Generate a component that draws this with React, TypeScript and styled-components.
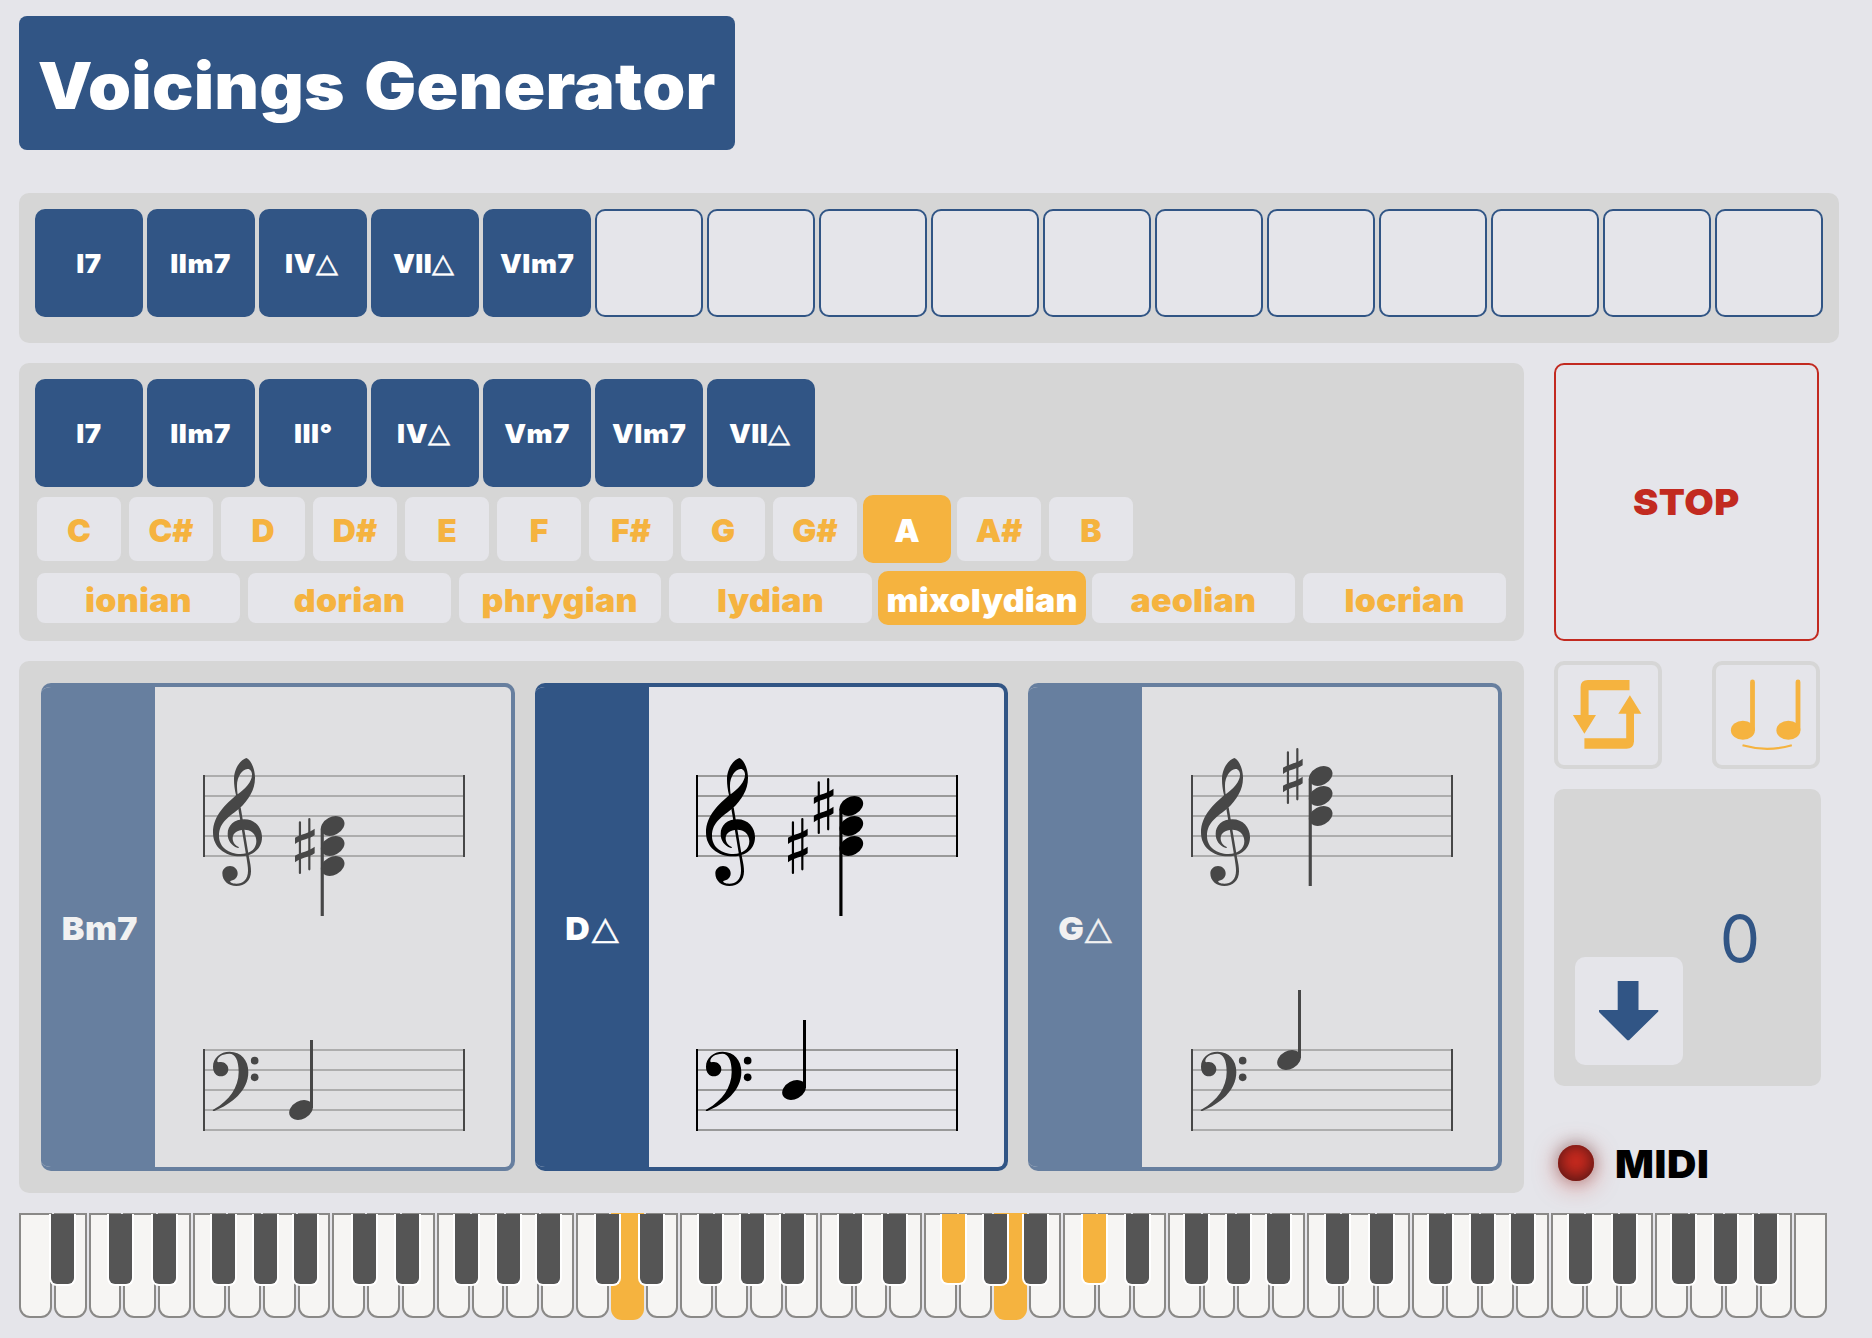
import React from 'react';
import styled, { createGlobalStyle, css } from 'styled-components';

const blue = '#315585';
const orange = '#f5b33f';
const red = '#c22a20';
const page = '#e5e5ea';
const panel = '#d6d6d6';

const GlobalStyle = createGlobalStyle`
  * { box-sizing: border-box; }
  body {
    margin: 0;
    background: ${page};
    font-family: Inter, 'Liberation Sans', sans-serif;
    font-weight: 900;
  }
`;

const Page = styled.div`
  width: 1872px;
  height: 1338px;
  padding: 16px 0 0 19px;
  display: flex;
  flex-direction: column;
  align-items: flex-start;
  overflow: hidden;
`;

const Title = styled.h1`
  margin: 0 0 43px;
  width: 716px;
  height: 134px;
  display: flex;
  align-items: center;
  justify-content: center;
  padding: 4px 0 0;
  border-radius: 8px;
  background: ${blue};
  color: #fff;
  font-size: 64px;
  font-weight: 900;
  letter-spacing: 0.2px;
  word-spacing: 5px;
  white-space: nowrap;
`;

const Wide = styled.span<{ $x: number }>`
  display: inline-block;
  transform: scaleX(${p => p.$x});
`;

const Panel = styled.section`
  border-radius: 10px;
  background: ${panel};
`;

const Progression = styled(Panel)`
  display: flex;
  gap: 4px;
  width: 1820px;
  height: 150px;
  padding: 16px;
  margin-bottom: 20px;
`;

const Triangle = styled.span`
  font-family: 'DejaVu Sans', sans-serif;
  font-weight: 400;
  letter-spacing: 0;
  margin: 0 3px 0 2px;
  -webkit-text-stroke: 0.5px currentColor;
  transform: translateY(-1.5px) scaleX(1.1);
`;

const Tile = styled.button<{ $empty?: boolean }>`
  flex: none;
  width: 108px;
  height: 108px;
  padding: 2px 0 0;
  display: flex;
  align-items: center;
  justify-content: center;
  border: 2px solid ${blue};
  border-radius: 10px;
  background: ${p => (p.$empty ? page : blue)};
  color: #fff;
  font: inherit;
  font-size: 26px;
  line-height: 32px;
  letter-spacing: 0.5px;
`;

const Main = styled.main`
  display: flex;
  gap: 30px;
  margin-bottom: 20px;
`;

const Left = styled.div`
  display: flex;
  flex-direction: column;
  gap: 20px;
  width: 1505px;
`;

const ScalePanel = styled(Panel)`
  height: 278px;
  padding: 16px;
  display: flex;
  flex-direction: column;
  gap: 8px;
`;

const Row = styled.div`
  display: flex;
  gap: 4px;
`;

const Modes = styled.div`
  display: grid;
  grid-template-columns: repeat(4, 1fr) 208px repeat(2, 1fr);
  gap: 4px;
`;

const Option = styled.button<{ $active?: boolean }>`
  padding: 0;
  display: flex;
  align-items: center;
  justify-content: center;
  border: 2px solid ${p => (p.$active ? orange : panel)};
  border-radius: 10px;
  background: ${p => (p.$active ? orange : page)};
  color: ${p => (p.$active ? '#fff' : orange)};
  font: inherit;
  font-size: 32px;
  line-height: 1;
`;

const KeyOption = styled(Option)`
  width: 88px;
  height: 68px;
  padding-top: 4px;
`;

const ModeOption = styled(Option)`
  height: 54px;
  padding-top: 5px;
  letter-spacing: 0.2px;
`;

const Cards = styled(Panel)`
  height: 532px;
  padding: 22px;
  display: grid;
  grid-template-columns: 474px 473px 474px;
  gap: 20px;
`;

const Card = styled.article<{ $current?: boolean }>`
  display: flex;
  border: 4px solid ${blue};
  border-left: 0;
  border-radius: 10px;
  overflow: hidden;
  background: ${p => (p.$current ? page : '#e6e6e9')};
  opacity: ${p => (p.$current ? 1 : 0.665)};
`;

const ChordName = styled.div`
  flex: none;
  width: 114px;
  display: flex;
  align-items: center;
  justify-content: center;
  gap: 1px;
  padding: 3px 0 0 3px;
  background: ${blue};
  color: #fff;
  font-size: 32px;
  line-height: 1;
  letter-spacing: 0.4px;
`;

const Score = styled.svg`
  display: block;
  flex: none;
  width: 356px;
  height: 480px;
`;

const Side = styled.aside`
  display: flex;
  flex-direction: column;
  gap: 20px;
  width: 267px;
`;

const Stop = styled.button`
  width: 265px;
  height: 278px;
  padding: 0;
  border: 2px solid ${red};
  border-radius: 10px;
  background: transparent;
  color: ${red};
  font: inherit;
  font-size: 36px;
  letter-spacing: 0.4px;
`;

const Toggles = styled.div`
  display: flex;
  justify-content: space-between;
  width: 266px;
`;

const Toggle = styled.button`
  width: 108px;
  height: 108px;
  padding: 0;
  border: 4px solid ${panel};
  border-radius: 10px;
  background: ${page};
  svg { display: block; margin: -4px; }
`;

const Transpose = styled(Panel)`
  width: 267px;
  height: 297px;
  padding: 0 0 21px 21px;
  display: flex;
  align-items: flex-end;
`;

const Down = styled.button`
  width: 108px;
  height: 108px;
  padding: 0;
  border: 0;
  border-radius: 10px;
  background: ${page};
  svg { display: block; }
`;

const Amount = styled.output`
  width: 114px;
  text-align: center;
  color: ${blue};
  font-family: Inter, sans-serif;
  font-size: 64px;
  font-weight: 400;
  line-height: 64px;
  padding-bottom: 94px;
`;

const Midi = styled.div`
  display: flex;
  align-items: center;
  gap: 24px;
  padding: 38px 0 0 4px;
  font-size: 38px;
  line-height: 36px;
  letter-spacing: 0.6px;
  color: #000;
`;

const MidiLabel = styled(Wide)`
  padding-top: 2px;
`;

const Led = styled.span`
  width: 36px;
  height: 36px;
  border-radius: 50%;
  background: #cf2b1f;
  box-shadow: rgba(0, 0, 0, 0.2) 0 -2px 14px 2px, inset #441313 0 -2px 18px,
    rgba(207, 43, 31, 0.5) 0 4px 24px;
`;

const Keyboard = styled.div`
  display: flex;
  gap: 2px;
`;

const White = styled.div<{ $on?: boolean }>`
  position: relative;
  width: 32.82px;
  height: 105px;
  border: 2px solid #8a8987;
  border-radius: 0 0 11px 11px;
  background: #f6f5f3;
  ${p => p.$on && css`
    height: 107px;
    border: 0;
    background: ${orange};
  `}
`;

const Black = styled.div<{ $shift: number; $on?: boolean; $flush?: boolean }>`
  position: absolute;
  z-index: 1;
  top: ${p => (p.$flush ? 1 : -1)}px;
  left: ${p => (p.$flush ? 33.8 : 31.8) + p.$shift - 13.5}px;
  width: 27px;
  height: ${p => (p.$on ? 71 : 72)}px;
  border: 2px solid #fff;
  border-top: 0;
  border-radius: 0 0 8px 8px;
  background: ${p => (p.$on ? orange : '#555')};
`;

function Chord({ text }: { text: string }) {
  const major = text.endsWith('△');
  return (
    <>
      <Wide $x={1.06}>{major ? text.slice(0, -1) : text}</Wide>
      {major && <Triangle>△</Triangle>}
    </>
  );
}

/* Glyphs are drawn on a grid of three units per pixel; staff lines are 60 units apart. */
const TREBLE =
  'M148 24C160 28 174 54 174 84C174 120 154 150 128 175C98 200 66 216 66 258C66 292 96 312 130 312C160 312 178 296 178 274C178 252 162 239 142 239C120 239 107 250 107 264C107 278 114 285 125 291C127 294 124 295 121 293C104 288 92 272 92 252C92 226 112 208 142 208C174 208 195 232 195 262C195 296 168 319 130 319C82 319 48 290 48 248C48 196 88 162 117 136C113 118 111 104 111 88C111 58 128 30 148 24ZM122 133C144 116 165 96 165 74C165 64 159 56 151 57C136 58 120 80 120 106C120 118 121 126 122 133Z';
const TREBLE_TAIL =
  'M124 176L131 172L156 322C160 340 162 352 162 364C162 392 144 408 118 408C94 408 76 393 76 370C76 358 86 348 99 348C112 348 122 358 122 370C122 384 112 391 100 393C98 396 104 401 118 401C138 401 153 388 153 362C153 350 151 340 149 326Z';
const BASS =
  'M48 1083C46 1080 48 1079 52 1077C96 1052 125 1012 125 966C125 930 115 911 97 911C76 911 60 922 61 934C62 938 66 936 72 936C84 936 94 946 94 957C94 970 84 979 72 979C58 979 48 968 48 950C48 924 70 905 98 905C132 905 154 930 154 966C154 1022 104 1062 52 1083Z';

function Head({ x, y }: { x: number; y: number }) {
  return <ellipse rx="37.5" ry="27" transform={`translate(${x} ${y}) rotate(-28)`} />;
}

function Sharp({ x, y }: { x: number; y: number }) {
  return (
    <g transform={`translate(${x} ${y})`}>
      <path d="M-18-70a3.300 3.300 0 0 1 6.600 0V82a3.300 3.300 0 0 1-6.600 0ZM10.200-80a3.300 3.300 0 0 1 6.600 0V71a3.300 3.300 0 0 1-6.600 0Z" />
      <path d="M-29.500-24C-12-35 12-37 29.500-51V-31C12-19-12-18-29.500-5ZM-29.500 30C-12 19 12 17 29.500 3V23C12 36-12 36-29.500 50Z" />
    </g>
  );
}

type Voicing = {
  name: string;
  current?: boolean;
  offset: number;
  chordX: number;
  heads: number[];
  sharps: [number, number][];
  stem: number;
  bass: number;
};

const voicings: Voicing[] = [
  { name: 'Bm7', offset: 42, chordX: 407, heads: [228, 288, 348], sharps: [[323.5, 287]], stem: 498, bass: 1080 },
  { name: 'D△', current: true, offset: 41, chordX: 484, heads: [168, 228, 288], sharps: [[401, 167], [323.5, 287]], stem: 498, bass: 1020 },
  { name: 'G△', offset: 43, chordX: 407, heads: [78, 138, 198], sharps: [[323.5, 77]], stem: 408, bass: 930 },
];

function Sheet({ v }: { v: Voicing }) {
  const top = v.heads[0];
  return (
    <Score viewBox="0 0 356 480">
      <g transform={`translate(${v.offset} 63) scale(0.3333333)`}>
        {[78, 900].map(y => (
          <g key={y}>
            {[0, 1, 2, 3, 4].map(i => (
              <rect key={i} x="18" y={y - 3 + i * 60} width="786" height="6" fill="#999" />
            ))}
            <rect x="18" y={y - 3} width="6" height="246" />
            <rect x="798" y={y - 3} width="6" height="246" />
          </g>
        ))}
        <path d={TREBLE} fillRule="evenodd" />
        <path d={TREBLE_TAIL} />
        <path d={BASS} />
        <circle cx="173" cy="932" r="11.500" />
        <circle cx="173" cy="982" r="11.500" />
        {v.heads.map(y => <Head key={y} x={v.chordX} y={y} />)}
        <rect x={v.chordX - 36} y={top + 8} width="9.500" height={v.stem - top - 8} />
        {v.sharps.map(([x, y]) => <Sharp key={x} x={x} y={y} />)}
        <Head x={312} y={v.bass} />
        <rect x="339" y={v.bass - 210} width="9" height="204" />
      </g>
    </Score>
  );
}

const sequence = ['I7', 'IIm7', 'IV△', 'VII△', 'VIm7', ...Array(11).fill('')];
const degrees = ['I7', 'IIm7', 'III°', 'IV△', 'Vm7', 'VIm7', 'VII△'];
const notes = ['C', 'C#', 'D', 'D#', 'E', 'F', 'F#', 'G', 'G#', 'A', 'A#', 'B'];
const modes = ['ionian', 'dorian', 'phrygian', 'lydian', 'mixolydian', 'aeolian', 'locrian'];

/* White keys run A B C D E F G; the value is how far the black key leans off the gap. */
const lean: (number | null)[] = [9.2, null, -1.6, 7.4, null, -3.3, 4.1];
const whitesOn = [17, 28];
const blacksOn = [26, 30];

export default function App() {
  return (
    <>
      <GlobalStyle />
      <Page>
        <Title><Wide $x={1.077}>Voicings Generator</Wide></Title>
        <Progression>
          {sequence.map((t, i) => (
            <Tile key={i} $empty={!t}>{t && <Chord text={t} />}</Tile>
          ))}
        </Progression>
        <Main>
          <Left>
            <ScalePanel>
              <Row>
                {degrees.map(t => <Tile key={t}><Chord text={t} /></Tile>)}
              </Row>
              <Row>
                {notes.map(n => <KeyOption key={n} $active={n === 'A'}>{n}</KeyOption>)}
              </Row>
              <Modes>
                {modes.map(m => (
                  <ModeOption key={m} $active={m === 'mixolydian'}><Wide $x={1.06}>{m}</Wide></ModeOption>
                ))}
              </Modes>
            </ScalePanel>
            <Cards>
              {voicings.map(v => (
                <Card key={v.name} $current={v.current}>
                  <ChordName><Chord text={v.name} /></ChordName>
                  <Sheet v={v} />
                </Card>
              ))}
            </Cards>
          </Left>
          <Side>
            <Stop><Wide $x={1.06}>STOP</Wide></Stop>
            <Toggles>
              <Toggle aria-label="Loop">
                <svg width="108" height="108" viewBox="0 0 108 108" fill={orange}>
                  <path d="M75.500 19V29.300H34.600V54H42L30.400 72.700 18.900 54H26.600V26Q26.600 19 34 19Z" />
                  <path d="M30.400 77.300H72.200V52.700H64.300L75.900 34.300 87.400 52.700H80V80.500Q79.500 87.700 72.500 87.700H30.400Z" />
                </svg>
              </Toggle>
              <Toggle aria-label="Tie notes">
                <svg width="108" height="108" viewBox="0 0 108 108" fill={orange}>
                  {[0.5, 46].map(x => (
                    <g key={x} transform={`translate(${x} 0)`}>
                      <ellipse cx="30.400" cy="69.300" rx="12" ry="9.500" />
                      <path d="M37.600 21a2.400 2.400 0 0 1 4.800 0V69.300H37.600Z" />
                    </g>
                  ))}
                  <path d="M30.500 84.300Q55 91.300 79.800 84.300" fill="none" stroke={orange} strokeWidth="2.200" />
                </svg>
              </Toggle>
            </Toggles>
            <Transpose>
              <Down aria-label="Transpose down">
                <svg width="108" height="108" viewBox="0 0 108 108" fill={blue}>
                  <path d="M42.700 24H63.500V53H83.300V54.500L54 83.300H52.300L24 55V53H42.700Z" />
                </svg>
              </Down>
              <Amount>0</Amount>
            </Transpose>
            <Midi>
              <Led />
              <MidiLabel $x={1.07}>MIDI</MidiLabel>
            </Midi>
          </Side>
        </Main>
        <Keyboard>
          {Array.from({ length: 52 }, (_, i) => {
            const on = whitesOn.includes(i);
            const shift = lean[i % 7];
            return (
              <White key={i} $on={on}>
                {shift !== null && i < 51 && (
                  <Black $shift={shift - i * 0.045} $on={blacksOn.includes(i)} $flush={on} />
                )}
              </White>
            );
          })}
        </Keyboard>
      </Page>
    </>
  );
}
